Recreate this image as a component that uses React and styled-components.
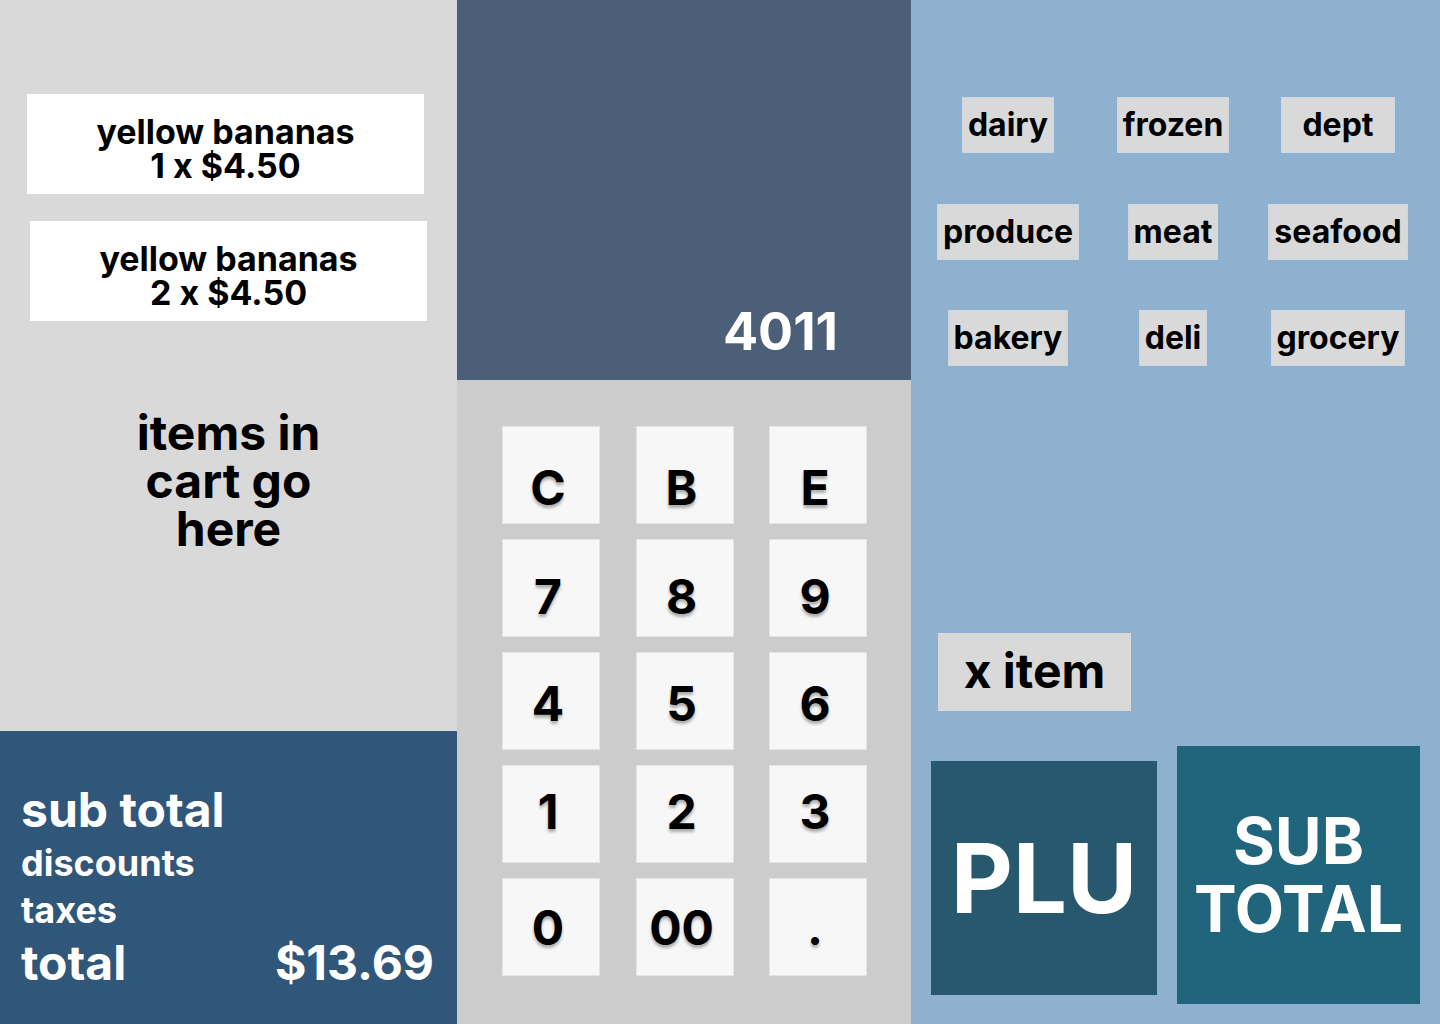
import styled, { createGlobalStyle } from 'styled-components';

const GlobalStyle = createGlobalStyle`
  * {
    box-sizing: border-box;
  }

  body {
    margin: 0;
    font-family: Inter, 'Noto Sans', sans-serif;
    font-weight: 700;
  }
`;

const cartItems = [
  { id: 1, name: 'yellow bananas', qty: 1, price: '$4.50', indent: 27 },
  { id: 2, name: 'yellow bananas', qty: 2, price: '$4.50', indent: 30 },
];

const keyRows = [
  { keys: ['C', 'B', 'E'], shift: 26 },
  { keys: ['7', '8', '9'], shift: 18 },
  { keys: ['4', '5', '6'], shift: 6 },
  { keys: ['1', '2', '3'], shift: -4 },
  { keys: ['0', '00', '.'], shift: 2 },
];

const departments = [
  { name: 'dairy' },
  { name: 'frozen' },
  { name: 'dept', pad: 20 },
  { name: 'produce' },
  { name: 'meat' },
  { name: 'seafood' },
  { name: 'bakery' },
  { name: 'deli' },
  { name: 'grocery' },
];

const App = () => {
  return (
    <>
      <GlobalStyle />
      <Register>
        <CartColumn>
          <CartList>
            {cartItems.map((item) => (
              <CartItem key={item.id} $indent={item.indent}>
                <span>{item.name}</span>
                <span>
                  {item.qty} x {item.price}
                </span>
              </CartItem>
            ))}
          </CartList>
          <Placeholder>
            items in
            <br />
            cart go
            <br />
            here
          </Placeholder>
          <Totals>
            <TotalLine $size={48}>sub total</TotalLine>
            <TotalLine $size={36}>discounts</TotalLine>
            <TotalLine $size={36}>taxes</TotalLine>
            <TotalLine $size={48}>
              <span>total</span>
              <span>$13.69</span>
            </TotalLine>
          </Totals>
        </CartColumn>

        <EntryColumn>
          <Display>
            <DisplayValue>4011</DisplayValue>
          </Display>
          <Keypad>
            {keyRows.map((row) =>
              row.keys.map((label) => (
                <Key key={label} $shift={row.shift}>
                  {label}
                </Key>
              ))
            )}
          </Keypad>
        </EntryColumn>

        <ActionColumn>
          <DeptGrid>
            {departments.map((dept) => (
              <DeptButton key={dept.name} $pad={dept.pad}>
                {dept.name}
              </DeptButton>
            ))}
          </DeptGrid>
          <QtyButton>x item</QtyButton>
          <ActionRow>
            <BigButton $bg="#27586e" $w={226} $h={234} $top={15} $size={96}>
              PLU
            </BigButton>
            <BigButton $bg="#20657c" $w={243} $h={258} $size={64}>
              SUB
              <br />
              TOTAL
            </BigButton>
          </ActionRow>
        </ActionColumn>
      </Register>
    </>
  );
};

const Register = styled.div`
  display: grid;
  grid-template-columns: 457px 454px 529px;
  width: 1440px;
  height: 1024px;
  overflow: hidden;
`;

const CartColumn = styled.div`
  display: flex;
  flex-direction: column;
  background: #d9d9d9;
`;

const CartList = styled.div`
  display: flex;
  flex-direction: column;
  gap: 27px;
  padding-top: 94px;
`;

const CartItem = styled.div`
  display: flex;
  flex-direction: column;
  justify-content: center;
  align-items: center;
  width: 397px;
  height: 100px;
  padding-top: 10px;
  margin-left: ${(props) => props.$indent}px;
  background: #ffffff;
  color: #000;
  font-size: 34px;
  line-height: 34px;
`;

const Placeholder = styled.div`
  flex: 1;
  padding-top: 88px;
  text-align: center;
  font-size: 48px;
  line-height: 48px;
  color: #000;
`;

const Totals = styled.div`
  display: flex;
  flex-direction: column;
  gap: 11px;
  height: 293px;
  padding: 55px 23px 0 21px;
  background: #30577a;
  color: #fff;
`;

const TotalLine = styled.div`
  display: flex;
  justify-content: space-between;
  font-size: ${(props) => props.$size}px;
  line-height: 1;
`;

const EntryColumn = styled.div`
  display: flex;
  flex-direction: column;
`;

const Display = styled.div`
  display: flex;
  justify-content: flex-end;
  align-items: flex-end;
  height: 380px;
  padding: 0 73px 22px 0;
  background: #4b5f79;
`;

const DisplayValue = styled.div`
  color: #fff;
  font-size: 52px;
  line-height: 1;
`;

const Keypad = styled.div`
  flex: 1;
  display: grid;
  grid-template-columns: repeat(3, 98px);
  grid-auto-rows: 98px;
  column-gap: 35.5px;
  row-gap: 15px;
  align-content: start;
  padding: 46px 0 0 45px;
  background: #cccccc;
`;

const Key = styled.div`
  display: flex;
  justify-content: center;
  align-items: center;
  padding-right: 6px;
  padding-top: ${(props) => Math.max(props.$shift, 0)}px;
  padding-bottom: ${(props) => Math.max(-props.$shift, 0)}px;
  background: #f7f7f7;
  border: 1px solid #e4e4e4;
  color: #000;
  font-size: 48px;
  line-height: 1;
  text-shadow: 0 3px 3px rgba(0, 0, 0, 0.3);
`;

const ActionColumn = styled.div`
  display: flex;
  flex-direction: column;
  padding-top: 97px;
  background: #8fb1d0;
`;

const DeptGrid = styled.div`
  display: grid;
  grid-template-columns: repeat(3, 165px);
  grid-auto-rows: 57px;
  row-gap: 49.5px;
  justify-items: center;
  margin-left: 14.5px;
`;

const DeptButton = styled.div`
  height: 56px;
  padding: 0 ${(props) => props.$pad || 5}px;
  background: #d9d9d9;
  border: 1px solid #cfd8e2;
  color: #000;
  font-size: 32px;
  line-height: 54px;
`;

const QtyButton = styled.div`
  width: 193px;
  height: 78px;
  margin: 266px 0 0 27px;
  background: #d9d9d9;
  color: #000;
  font-size: 48px;
  line-height: 76px;
  text-align: center;
`;

const ActionRow = styled.div`
  display: flex;
  align-items: flex-start;
  gap: 20px;
  margin-top: 35px;
  padding: 0 20px;
`;

const BigButton = styled.div`
  display: flex;
  justify-content: center;
  align-items: center;
  width: ${(props) => props.$w}px;
  height: ${(props) => props.$h}px;
  margin-top: ${(props) => props.$top || 0}px;
  background: ${(props) => props.$bg};
  color: #fff;
  font-size: ${(props) => props.$size}px;
  line-height: 68px;
  text-align: center;
`;

export default App;
